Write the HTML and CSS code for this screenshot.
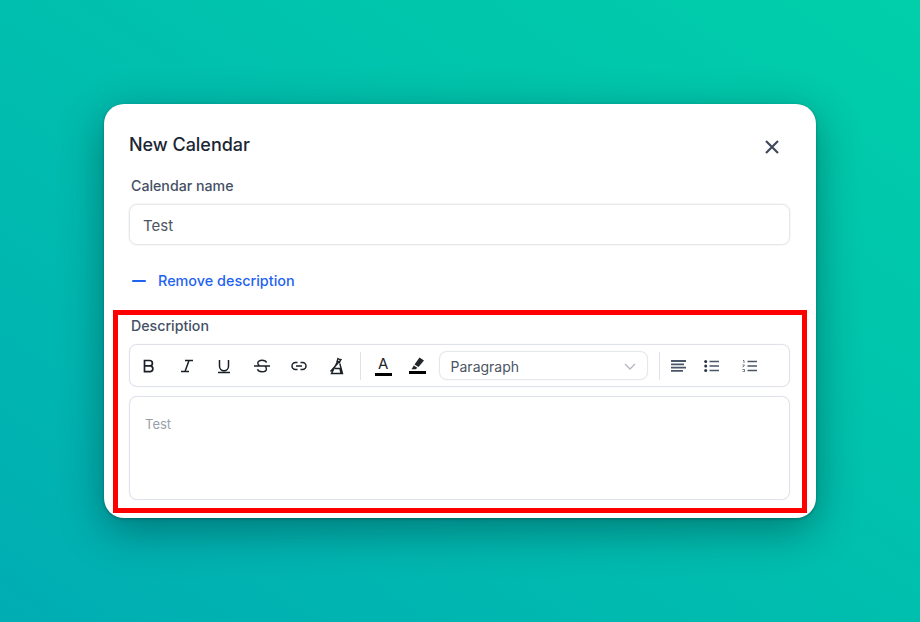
FILE: index.html
```html
<!DOCTYPE html>
<html lang="en">
<head>
    <meta charset="UTF-8">
    <title>New Calendar</title>
    <link rel="stylesheet" href="styles.css">
</head>
<body>
    <div class="modal">
        <div class="modal-head">
            <h2>New Calendar</h2>
            <svg class="close-icon" width="16" height="16" viewBox="0 0 16 16"><path d="M2 2l12 12M14 2L2 14" stroke="#3f4a5c" stroke-width="2.2" fill="none"/></svg>
        </div>

        <label class="field-label name-label">Calendar name</label>
        <div class="name-input">Test</div>

        <div class="remove-link">
            <svg width="14" height="2" viewBox="0 0 14 2"><rect width="14" height="2" rx="1" fill="#1f63f0"/></svg>
            <span>Remove description</span>
        </div>

        <!-- description editor -->
        <label class="field-label desc-label">Description</label>
        <div class="toolbar">
            <div class="tool"><svg width="16" height="16" viewBox="0 0 16 16" fill="none" stroke="#1b1f27" stroke-width="1.7"><path d="M3.5 2.5h5.2a2.7 2.7 0 0 1 0 5.4H3.5zM3.5 7.9h6a2.9 2.9 0 0 1 0 5.7h-6zM3.5 2v12"/></svg></div>
            <div class="tool"><svg width="16" height="16" viewBox="0 0 16 16" fill="none" stroke="#1b1f27" stroke-width="1.5"><path d="M6 2.5h8M2 13.5h8M10 2.500L6 13.500"/></svg></div>
            <div class="tool"><svg width="16" height="16" viewBox="0 0 16 16" fill="none" stroke="#1b1f27" stroke-width="1.5"><path d="M3.5 2v6.2a4.5 4.5 0 0 0 9 0V2M2 14.5h12"/></svg></div>
            <div class="tool"><svg width="16" height="16" viewBox="0 0 16 16" fill="none" stroke="#1b1f27" stroke-width="1.4"><path d="M0 8h16M12.5 4.6C12 3 10.3 2.3 8 2.3 5.6 2.3 3.8 3.4 3.8 5c0 1.3.8 2.3 2 3M3.5 11.200c.5 1.700 2.300 2.500 4.500 2.500 2.500 0 4.400-1 4.400-2.800 0-1.100-.5-2.100-1.500-2.900"/></svg></div>
            <div class="tool"><svg width="16" height="16" viewBox="0 0 16 16" fill="none" stroke="#1b1f27" stroke-width="1.5"><path d="M6.5 4.5H4.5a3.5 3.5 0 0 0 0 7h2M9.5 4.5h2a3.5 3.5 0 0 1 0 7h-2M5 8h6"/></svg></div>
            <div class="tool"><svg width="16" height="18" viewBox="0 0 16 18" fill="none" stroke="#1b1f27" stroke-width="1.4"><path d="M9 1.500l2.500 1.500-1 2.500-2.500-.8zM8 5.500L2.500 16.500h11L10.800 6.500M6 11.500h5l1 5M1.500 14.500L12.500 2"/></svg></div>
            <div class="divider"></div>
            <div class="tool color-tool">
                <span class="letter-a">A</span>
                <span class="color-bar"></span>
            </div>
            <div class="tool color-tool">
                <svg width="15" height="13" viewBox="0 0 15 13"><path d="M9.5 0.500L14 3.500 8.500 10 4.500 7.500zM3.800 8.500l3.500 2.300-1.500 1.500H1.500z" fill="#22252b"/></svg>
                <span class="color-bar"></span>
            </div>
            <div class="format-select">
                <span>Paragraph</span>
                <svg width="12" height="7" viewBox="0 0 12 7" fill="none" stroke="#b3b7bf" stroke-width="1.3"><path d="M1 1l5 5 5-5"/></svg>
            </div>
            <div class="divider divider-right"></div>
            <div class="tool small-tool"><svg width="16" height="12" viewBox="0 0 16 12" stroke="#4a5568" stroke-width="1.8"><path d="M0 1h15M0 4.300h13M0 7.600h15M0 10.900h12"/></svg></div>
            <div class="tool small-tool"><svg width="16" height="12" viewBox="0 0 16 12" stroke="#4a5568" stroke-width="1.7" fill="#2c3442"><path d="M5.500 1.500H15M5.500 6H15M5.500 10.500H15"/><circle cx="1.7" cy="1.5" r="1.5" stroke="none"/><circle cx="1.7" cy="6" r="1.5" stroke="none"/><circle cx="1.7" cy="10.5" r="1.5" stroke="none"/></svg></div>
            <div class="tool"><svg width="16" height="12" viewBox="0 0 16 12" stroke="#4a5568" stroke-width="1.7" fill="none"><path d="M5.500 1.500H15M5.500 6H15M5.500 10.500H15"/><path d="M1 .5h1v2.500M.5 5h2L.8 7.300M.5 9.500h2v2.200h-2" stroke-width=".8"/></svg></div>
        </div>
        <div class="editor">Test</div>

        <div class="highlight"></div>
    </div>
</body>
</html>
```

FILE: styles.css
```css
* {
    box-sizing: border-box;
}

body {
    margin: 0;
    height: 622px;
    overflow: hidden;
    font-family: Inter, "Liberation Sans", sans-serif;
    background: linear-gradient(to bottom left, #00cfaa 0%, #00bfae 50%, #00adb3 100%);
    display: flex;
    justify-content: center;
    align-items: center;
}

.modal {
    position: relative;
    width: 712px;
    height: 414px;
    padding: 27px 26px 0 25px;
    background-color: #fff;
    border-radius: 20px;
    box-shadow: 0 12px 44px rgba(0, 30, 40, 0.42), 0 1px 3px rgba(0, 0, 0, 0.3);
}

.modal-head {
    display: flex;
    justify-content: space-between;
    align-items: center;
    height: 26px;
    padding-right: 10px;
}

.modal-head h2 {
    margin: 0;
    font-size: 18px;
    font-weight: 500;
    letter-spacing: -0.03px;
    color: #1a2433;
}

.close-icon {
    margin-top: 6px;
}

.field-label {
    display: block;
    margin-left: 2px;
    font-size: 14.2px;
    font-weight: 500;
    line-height: 17px;
    color: #465064;
}

.name-label {
    margin-top: 20px;
}

.name-input {
    height: 41px;
    margin-top: 10px;
    padding: 0 13px;
    border: 1px solid #e6e7eb;
    border-radius: 8px;
    box-shadow: 0 0 2px rgba(0, 0, 0, 0.12);
    font-size: 15px;
    line-height: 41px;
    color: #4b5563;
}

.remove-link {
    display: flex;
    align-items: center;
    gap: 12px;
    margin-top: 26px;
    margin-left: 3px;
    font-size: 14.4px;
    font-weight: 500;
    line-height: 20px;
    color: #1f63f0;
}

.desc-label {
    margin-top: 26px;
}

.toolbar {
    display: flex;
    align-items: center;
    height: 43px;
    margin-top: 10px;
    padding-left: 11px;
    border: 1px solid #dfe2ea;
    border-radius: 8px;
    box-shadow: 0 0 1px #d5d9e4;
}

.tool {
    display: flex;
    justify-content: center;
    align-items: center;
    width: 16px;
    margin-right: 21.6px;
}

.divider {
    width: 1px;
    height: 28px;
    margin-left: -7px;
    margin-right: 14px;
    background-color: #dfe2ea;
}

.color-tool {
    flex-direction: column;
    width: 17px;
    height: 24px;
    margin-right: 17px;
}

.color-bar {
    width: 17px;
    height: 3px;
    margin-top: 1px;
    background-color: #000;
}

.letter-a {
    font-size: 15px;
    line-height: 16px;
    color: #22252b;
}

.format-select {
    display: flex;
    justify-content: space-between;
    align-items: center;
    width: 209px;
    height: 29px;
    margin-left: -4px;
    padding: 1px 11px 0 11px;
    border: 1px solid #e6e7eb;
    border-radius: 8px;
    box-shadow: 0 0 1px #d5d9e4;
    font-size: 14px;
    color: #4b5563;
}

.divider-right {
    margin-left: 11px;
    margin-right: 11px;
}

.small-tool {
    margin-right: 17px;
}

.small-tool + .tool {
    margin-right: 0;
}

.small-tool + .small-tool {
    margin-right: 22px;
}

.editor {
    height: 104px;
    margin-top: 9px;
    padding: 19px 15px;
    border: 1px solid #dfe2ea;
    border-radius: 8px;
    box-shadow: 0 0 1px #d5d9e4;
    font-size: 13px;
    line-height: 16px;
    color: #9aa0a9;
}

/* red annotation round the description area */
.highlight {
    position: absolute;
    left: 9px;
    top: 206px;
    width: 694px;
    height: 203px;
    border: 5px solid #fe0000;
}
```
